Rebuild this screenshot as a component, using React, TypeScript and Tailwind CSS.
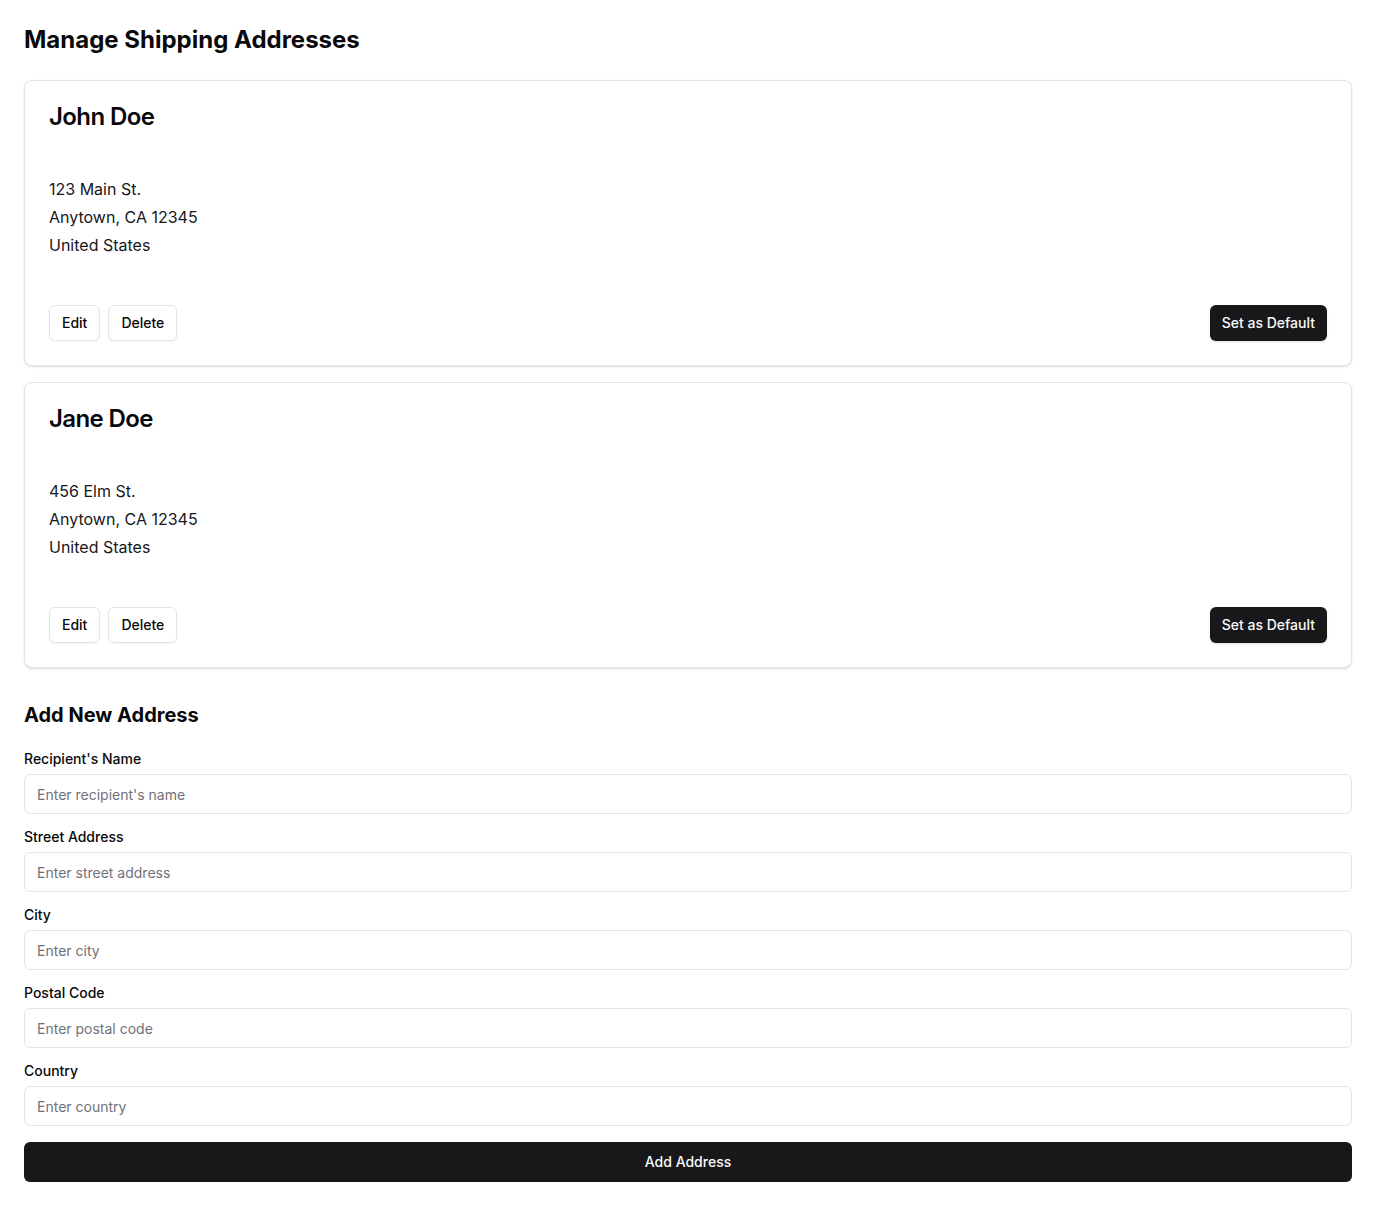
import React from "react";

const ADDRESSES = [
  { name: "John Doe", street: "123 Main St.", city: "Anytown, CA 12345", country: "United States" },
  { name: "Jane Doe", street: "456 Elm St.", city: "Anytown, CA 12345", country: "United States" },
];

const FIELDS = [
  { label: "Recipient's Name", placeholder: "Enter recipient's name" },
  { label: "Street Address", placeholder: "Enter street address" },
  { label: "City", placeholder: "Enter city" },
  { label: "Postal Code", placeholder: "Enter postal code" },
  { label: "Country", placeholder: "Enter country" },
];

export default function App() {
  return (
    <div className="min-h-screen bg-white p-6 font-['Inter',sans-serif] text-[#09090b]">
      <h1 className="text-2xl font-bold leading-8">Manage Shipping Addresses</h1>

      <div className="mt-6 flex flex-col gap-4">
        {ADDRESSES.map((a) => (
          <div key={a.name} className="rounded-lg border border-[#e4e4e7] bg-white p-6 shadow-sm">
            <h3 className="text-2xl font-semibold leading-none tracking-tight">{a.name}</h3>
            <div className="mt-[46px] text-base leading-7 text-[#18181b]">
              <p>{a.street}</p>
              <p>{a.city}</p>
              <p>{a.country}</p>
            </div>
            <div className="mt-[46px] flex items-center justify-between">
              <div className="flex gap-2">
                <button className="h-9 rounded-md border border-[#e4e4e7] bg-white px-3 text-sm font-medium shadow-xs">
                  Edit
                </button>
                <button className="h-9 rounded-md border border-[#e4e4e7] bg-white px-3 text-sm font-medium shadow-xs">
                  Delete
                </button>
              </div>
              <button className="h-9 rounded-md bg-[#18181b] px-3 text-sm font-medium text-[#fafafa] shadow-sm">
                Set as Default
              </button>
            </div>
          </div>
        ))}
      </div>

      <h2 className="mt-[33px] text-xl font-bold leading-7">Add New Address</h2>
      <form className="mt-[23px] flex flex-col gap-4" onSubmit={(e) => e.preventDefault()}>
        {FIELDS.map((f) => (
          <div key={f.label} className="flex flex-col gap-2">
            <label className="text-sm font-medium leading-none">{f.label}</label>
            <input
              placeholder={f.placeholder}
              className="h-10 w-full rounded-md border border-[#e4e4e7] bg-white px-3 text-sm outline-none placeholder:text-[#71717a]"
            />
          </div>
        ))}
        <button
          type="submit"
          className="h-10 w-full rounded-md bg-[#18181b] text-sm font-medium text-[#fafafa]"
        >
          Add Address
        </button>
      </form>
    </div>
  );
}
